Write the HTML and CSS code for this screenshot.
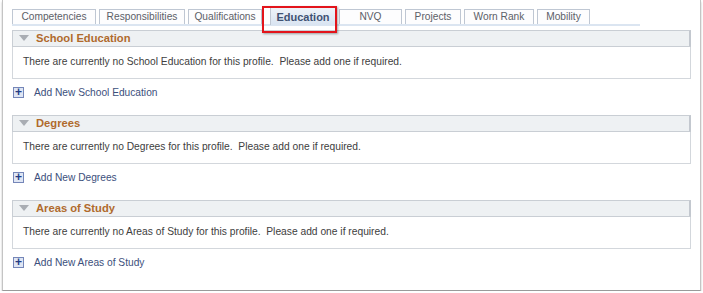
FILE: index.html
```html
<!DOCTYPE html>
<html lang="en">
<head>
    <meta charset="UTF-8">
    <title>Education</title>
    <link rel="stylesheet" href="styles.css">
</head>
<body>
    <div class="frame">
        <div class="tabs">
            <a class="tab">Competencies</a>
            <a class="tab">Responsibilities</a>
            <a class="tab">Qualifications</a>
            <a class="tab active">Education</a>
            <a class="tab">NVQ</a>
            <a class="tab">Projects</a>
            <a class="tab">Worn Rank</a>
            <a class="tab">Mobility</a>
        </div>

        <div class="section">
            <div class="section-head"><span class="arrow"></span>School Education</div>
            <div class="section-body">There are currently no School Education for this profile.&nbsp; Please add one if required.</div>
        </div>
        <div class="add-row"><span class="plus">+</span>Add New School Education</div>

        <div class="section">
            <div class="section-head"><span class="arrow"></span>Degrees</div>
            <div class="section-body">There are currently no Degrees for this profile.&nbsp; Please add one if required.</div>
        </div>
        <div class="add-row"><span class="plus">+</span>Add New Degrees</div>

        <div class="section">
            <div class="section-head"><span class="arrow"></span>Areas of Study</div>
            <div class="section-body">There are currently no Areas of Study for this profile.&nbsp; Please add one if required.</div>
        </div>
        <div class="add-row"><span class="plus">+</span>Add New Areas of Study</div>
    </div>
</body>
</html>
```

FILE: styles.css
```css
body {
    margin: 0;
    background-color: #ffffff;
    font-family: "Liberation Sans", Arial, sans-serif;
}
.frame {
    margin-left: 2px;
    width: 699px;
    height: 291px;
    box-sizing: border-box;
    padding: 9px 0 0 9px;
    background-color: #fff;
    border-left: 1px solid #c4c4c4;
    border-right: 1px solid #c4c4c4;
    border-bottom: 1px solid #9a9a9a;
    box-shadow: 0 2px 2px rgba(0, 0, 0, 0.25);
}
.tabs {
    display: flex;
    gap: 3px;
    width: 628px;
    height: 15px;
    border-bottom: 2px solid #dbe5f1;
}
.tab {
    display: block;
    height: 15px;
    box-sizing: border-box;
    border: 1px solid #bfc7d3;
    border-bottom: none;
    background-color: #fdfdfe;
    font-size: 10.2px;
    line-height: 14px;
    color: #5c6068;
    text-align: center;
}
.tab:nth-child(1) { width: 84px; }
.tab:nth-child(2) { width: 86px; }
.tab:nth-child(3) { width: 74px; }
.tab:nth-child(4) { width: 66px; margin-left: 5px; }
.tab:nth-child(5) { width: 63px; }
.tab:nth-child(6) { width: 56px; }
.tab:nth-child(7) { width: 70px; }
.tab:nth-child(8) { width: 53px; }
.tab.active {
    position: relative;
    height: 18px;
    margin-top: -2px;
    padding-top: 2px;
    background: linear-gradient(#eef3f9, #d9e4f1);
    font-size: 11px;
    font-weight: bold;
    color: #3f5273;
}
/* highlight box drawn round the selected tab */
.tab.active::after {
    content: "";
    position: absolute;
    left: -9px;
    top: -2px;
    width: 75px;
    height: 27px;
    box-sizing: border-box;
    border: 2px solid #e3141b;
    box-shadow: 1px 1px 2px rgba(0, 0, 0, 0.35);
}
.section {
    width: 679px;
    margin-top: 4px;
}
.section-head {
    height: 17px;
    box-sizing: border-box;
    background-color: #eef1f3;
    border: 1px solid #c9ced4;
    border-right: 2px solid #c3c8cf;
    font-size: 11.2px;
    font-weight: bold;
    line-height: 15px;
    color: #b06a2c;
    padding-left: 6px;
}
.arrow {
    display: inline-block;
    width: 0;
    height: 0;
    border-left: 5px solid transparent;
    border-right: 5px solid transparent;
    border-top: 6px solid #a9adb3;
    margin-right: 7px;
    vertical-align: 1px;
}
.section-body {
    height: 32px;
    box-sizing: border-box;
    border: 1px solid #d3d7dc;
    border-top: none;
    padding-left: 10px;
    font-size: 10.25px;
    line-height: 30px;
    color: #404040;
}
.add-row {
    display: flex;
    align-items: center;
    height: 11px;
    margin-top: 8px;
    margin-bottom: 17px;
    padding-left: 1px;
    font-size: 10.2px;
    line-height: 13px;
    color: #3c4f7c;
}
.plus {
    display: inline-block;
    width: 11px;
    height: 11px;
    box-sizing: border-box;
    border: 1px solid #7586b8;
    background-color: #dfe6f4;
    color: #223c85;
    font-size: 12px;
    font-weight: bold;
    line-height: 9px;
    text-align: center;
    margin-right: 10px;
}
```
